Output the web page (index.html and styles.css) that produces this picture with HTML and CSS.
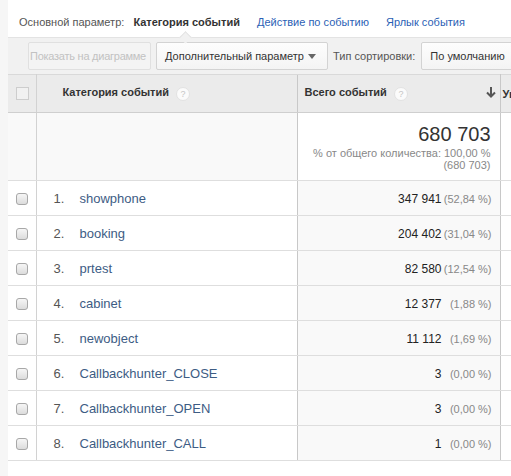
FILE: index.html
```html
<!DOCTYPE html>
<html lang="ru">
<head>
<meta charset="utf-8">
<title>Категория событий</title>
<link rel="stylesheet" href="styles.css">
</head>
<body>
<div class="page">
  <div class="primary">
    <span class="label">Основной параметр:</span>
    <span class="current">Категория событий</span>
    <a class="dim-link">Действие по событию</a>
    <a class="dim-link">Ярлык события</a>
  </div>
  <div class="toolbar">
    <span class="caret"></span>
    <button class="btn btn-disabled">Показать на диаграмме</button>
    <button class="btn btn-select"><span class="btn-text">Дополнительный параметр</span><svg class="dd" width="8" height="5" viewBox="0 0 8 5"><path d="M0 0H8L4 5Z" fill="#666"/></svg></button>
    <span class="sort-label">Тип сортировки:</span>
    <button class="btn btn-sort">По умолчанию</button>
  </div>
  <table class="grid">
    <colgroup>
      <col class="c-check"><col class="c-dim"><col class="c-total"><col class="c-next">
    </colgroup>
    <thead>
      <tr class="head">
        <th class="check"><span class="hbox"></span></th>
        <th class="dim-head">Категория событий <span class="help">?</span></th>
        <th class="total-head"><span>Всего событий <span class="help">?</span></span><svg class="sort" width="10" height="11" viewBox="0 0 10 11"><path d="M5 0V9.5M1 5.5L5 9.5L9 5.5" fill="none" stroke="#555" stroke-width="2"/></svg></th>
        <th class="next-head">Уникальные события</th>
      </tr>
      <tr class="summary">
        <td class="check"></td>
        <td class="dim-sum"></td>
        <td class="total-sum">
          <div class="big">680 703</div>
          <div class="sub">% от общего количества: 100,00 %</div>
          <div class="sub">(680 703)</div>
        </td>
        <td class="next-sum"></td>
      </tr>
    </thead>
    <tbody>
      <tr><td class="check"><span class="box"></span></td><td class="name"><span class="num">1.</span><a>showphone</a></td><td class="val"><span class="v">347 941</span><span class="pct">(52,84 %)</span></td><td class="next"></td></tr>
      <tr><td class="check"><span class="box"></span></td><td class="name"><span class="num">2.</span><a>booking</a></td><td class="val"><span class="v">204 402</span><span class="pct">(31,04 %)</span></td><td class="next"></td></tr>
      <tr><td class="check"><span class="box"></span></td><td class="name"><span class="num">3.</span><a>prtest</a></td><td class="val"><span class="v">82 580</span><span class="pct">(12,54 %)</span></td><td class="next"></td></tr>
      <tr><td class="check"><span class="box"></span></td><td class="name"><span class="num">4.</span><a>cabinet</a></td><td class="val"><span class="v">12 377</span><span class="pct">(1,88 %)</span></td><td class="next"></td></tr>
      <tr><td class="check"><span class="box"></span></td><td class="name"><span class="num">5.</span><a>newobject</a></td><td class="val"><span class="v">11 112</span><span class="pct">(1,69 %)</span></td><td class="next"></td></tr>
      <tr><td class="check"><span class="box"></span></td><td class="name"><span class="num">6.</span><a>Callbackhunter_CLOSE</a></td><td class="val"><span class="v">3</span><span class="pct">(0,00 %)</span></td><td class="next"></td></tr>
      <tr><td class="check"><span class="box"></span></td><td class="name"><span class="num">7.</span><a>Callbackhunter_OPEN</a></td><td class="val"><span class="v">3</span><span class="pct">(0,00 %)</span></td><td class="next"></td></tr>
      <tr><td class="check"><span class="box"></span></td><td class="name"><span class="num">8.</span><a>Callbackhunter_CALL</a></td><td class="val"><span class="v">1</span><span class="pct">(0,00 %)</span></td><td class="next"></td></tr>
    </tbody>
  </table>
</div>
</body>
</html>
```
FILE: styles.css
```css
html, body {
  margin: 0;
  padding: 0;
}
body {
  background: #f6f6f6;
  overflow: hidden;
  font-family: "Liberation Sans", Arial, sans-serif;
  color: #333;
  width: 511px;
  height: 476px;
}
.page {
  margin-left: 8px;
  width: 640px;
  height: 476px;
  background: #fff;
}
.primary {
  height: 37px;
  box-sizing: border-box;
  padding: 15px 0 0 11px;
  font-size: 11px;
  line-height: 14px;
  white-space: nowrap;
}
.primary .label {
  color: #555;
}
.primary .current {
  font-weight: bold;
  color: #333;
  margin-left: 6px;
}
.dim-link {
  color: #2b5fb5;
  margin-left: 14px;
}
.toolbar {
  position: relative;
  height: 37px;
  box-sizing: border-box;
  background: #f1f1f1;
  border-top: 1px solid #e3e3e3;
  padding: 4px 0 0 20px;
  display: flex;
  align-items: flex-start;
  white-space: nowrap;
}
.caret {
  position: absolute;
  left: 173px;
  top: -5px;
  width: 8px;
  height: 8px;
  background: #f1f1f1;
  border-top: 1px solid #e3e3e3;
  border-left: 1px solid #e3e3e3;
  transform: rotate(45deg);
}
.btn {
  height: 28px;
  box-sizing: border-box;
  font-family: "Liberation Sans", Arial, sans-serif;
  font-size: 11px;
  border: 1px solid #d3d3d3;
  border-radius: 2px;
  background: linear-gradient(#fdfdfd, #f4f4f4);
  color: #333;
  padding: 0 8px;
  text-align: left;
  white-space: nowrap;
  overflow: hidden;
  display: flex;
  align-items: center;
  flex-shrink: 0;
}
.btn-disabled {
  width: 123px;
  padding: 0 1px;
  letter-spacing: -0.25px;
  color: #c2c2c2;
  border-color: #e0e0e0;
  background: #f4f4f4;
}
.btn-select {
  margin-left: 5px;
  width: 172px;
}
.btn-text {
  flex: 1;
}
.dd {
  flex-shrink: 0;
  margin-right: 3px;
}
.sort-label {
  font-size: 11px;
  color: #555;
  line-height: 28px;
  margin-left: 5px;
}
.btn-sort {
  margin-left: 6px;
  width: 120px;
}
.grid {
  border-collapse: collapse;
  table-layout: fixed;
  width: 612px;
  font-size: 13px;
}
.c-check { width: 28px; }
.c-dim { width: 261px; }
.c-total { width: 203px; }
.c-next { width: 120px; }
.grid td, .grid th {
  padding: 0;
  border-bottom: 1px solid #dedede;
  white-space: nowrap;
  overflow: hidden;
}
.head {
  height: 38px;
}
.head th {
  background: #ebebeb;
  border-top: 1px solid #d9d9d9;
  border-bottom: 1px solid #cfcfcf;
  font-size: 11px;
  font-weight: bold;
  color: #333;
  text-align: left;
  vertical-align: middle;
}
.grid .check {
  border-right: 1px solid #d2d2d2;
  text-align: center;
  vertical-align: middle;
}
.hbox {
  display: inline-block;
  width: 11px;
  height: 11px;
  border: 1px solid #cdcdcd;
  background: #f1f1f1;
  vertical-align: middle;
  margin-left: 1px;
}
.box {
  display: inline-block;
  width: 10px;
  height: 10px;
  border: 1px solid #a8a8a8;
  border-radius: 3px;
  background: linear-gradient(#f6f6f6, #dcdcdc);
  vertical-align: middle;
}
.dim-head {
  padding-left: 26px !important;
}
.help {
  display: inline-block;
  width: 12px;
  height: 12px;
  border-radius: 50%;
  background: #fbfbfb;
  border: 1px solid #e2e2e2;
  color: #c6c6c6;
  font-size: 9px;
  line-height: 12px;
  text-align: center;
  font-weight: normal;
  margin-left: 4px;
  vertical-align: middle;
}
.head .total-head {
  border-left: 1px solid #c8c8c8;
  border-right: 1px solid #c8c8c8;
  padding: 0 4px 0 7px;
}
.total-head .sort {
  float: right;
  margin-top: 1px;
}
.next-head {
  padding-left: 2px !important;
}
.summary {
  height: 68px;
}
.summary td {
  background: #f9f9f9;
  vertical-align: top;
}
.summary .total-sum {
  background: #fff;
  border-left: 1px solid #c8c8c8;
  border-right: 1px solid #c8c8c8;
  text-align: right;
  padding: 10px 9px 0 0;
}
.summary .next-sum {
  background: #fff;
}
.big {
  font-size: 20px;
  line-height: 22px;
  color: #333;
  margin-bottom: 2px;
}
.sub {
  font-size: 11px;
  line-height: 12px;
  color: #888;
}
tbody tr {
  height: 35px;
}
tbody td {
  vertical-align: middle;
  background: #fff;
}
.name {
  padding-left: 17px !important;
}
.num {
  display: inline-block;
  width: 26px;
  color: #555;
}
.name a {
  color: #3d5c84;
}
tbody .val {
  background: #f9f9f9;
  border-left: 1px solid #c8c8c8;
  border-right: 1px solid #c8c8c8;
  text-align: right;
  padding-right: 8px !important;
}
.v {
  font-size: 12px;
  color: #222;
  margin-right: 2px;
}
.pct {
  display: inline-block;
  width: 48px;
  text-align: right;
  font-size: 11px;
  color: #888;
}
```
